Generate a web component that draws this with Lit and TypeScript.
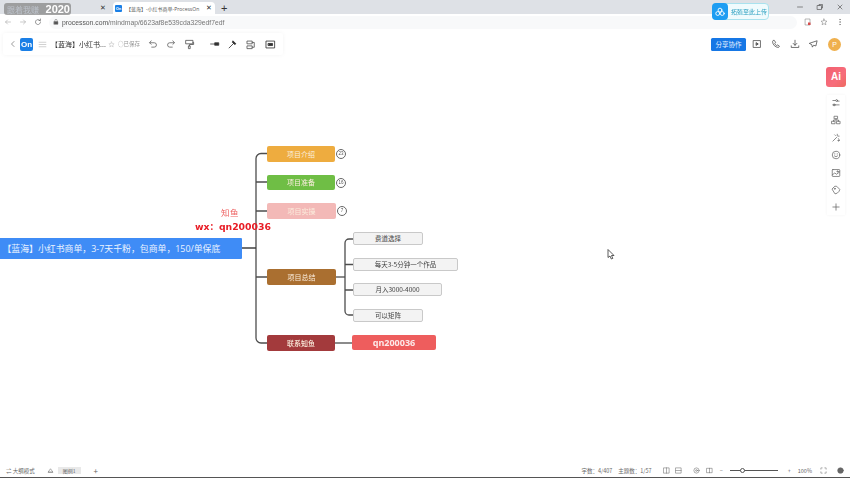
import { LitElement, html, css, svg } from "lit";
import { customElement } from "lit/decorators.js";

const ic = (w: number, body: unknown, cls = "") => html`<svg class="ic ${cls}" width=${w} height=${w} viewBox="0 0 16 16" fill="none" stroke="currentColor" stroke-width="1.2" stroke-linecap="round" stroke-linejoin="round">${body}</svg>`;

const topics = [
  { cls: "orange", x: 267, y: 146, w: 68, h: 16, t: "项目介绍", badge: "23" },
  { cls: "green", x: 267, y: 175, w: 68, h: 15, t: "项目准备", badge: "16" },
  { cls: "pink", x: 267, y: 203, w: 69, h: 16, t: "项目实操", badge: "7" },
  { cls: "brown", x: 267, y: 269, w: 69, h: 16, t: "项目总结" },
  { cls: "maroon", x: 267, y: 335, w: 68, h: 16, t: "联系知鱼" },
];
const leaves = [
  { x: 353, y: 232, w: 70, t: "费道选择" },
  { x: 353, y: 258, w: 105, t: "每天3-5分钟一个作品" },
  { x: 353, y: 283, w: 89, t: "月入3000-4000" },
  { x: 353, y: 309, w: 70, t: "可以矩阵" },
];

@customElement("app-root")
export class AppRoot extends LitElement {
  static styles = css`
    :host { display: block; width: 850px; height: 478px; overflow: hidden; background: #fff; font-family: "Open Sans", "Noto Sans CJK SC", sans-serif; color: #444; }
    .page { width: 850px; height: 478px; display: flex; flex-direction: column; filter: blur(0.4px); position: relative; overflow: hidden; }
    .ic { display: block; flex: none; }

    .tabs { height: 14px; flex: none; background: #dee1e6; display: flex; align-items: flex-end; position: relative; font-size: 5px; color: #555; }
    .tab { width: 109px; height: 12px; display: flex; align-items: center; justify-content: flex-end; padding-right: 3px; box-sizing: border-box; flex: none; }
    .tab.active { width: 102px; margin-left: 4px; background: #fff; border-radius: 4px 4px 0 0; justify-content: flex-start; padding: 0 3px 0 2px; gap: 4px; }
    .favicon { width: 7px; height: 7px; background: #1a7fe6; color: #fff; font: 700 4px "Liberation Sans", sans-serif; text-align: center; line-height: 7px; border-radius: 1px; flex: none; }
    .tab .x { font: 7px "Liberation Sans", sans-serif; color: #333; flex: none; }
    .tab .grow { flex: 1; min-width: 0; white-space: nowrap; }
    .plus { margin-left: 6px; font: 11px/12px "Liberation Sans", sans-serif; color: #333; height: 12px; }
    .winctl { margin-left: auto; display: flex; gap: 12px; padding-right: 6px; height: 14px; align-items: center; color: #444; }
    .watermark { position: absolute; left: 4px; top: 3px; height: 12px; width: 67px; border-radius: 3px; background: rgba(132,132,132,.72); display: flex; align-items: center; justify-content: space-between; padding: 0 1px 0 3px; box-sizing: border-box; white-space: nowrap; }
    .watermark .cn { font: 8px "Noto Sans CJK SC", sans-serif; color: #bcc2ca; }
    .watermark b { font: 700 11px "Liberation Sans", sans-serif; color: #fff; }
    .cloud { position: absolute; left: 712px; top: 3px; width: 57px; height: 17px; border: 1px solid #a9e2ee; box-sizing: border-box; border-radius: 4px; background: #f0fbfd; display: flex; align-items: center; font-size: 6px; color: #2a9fc0; gap: 3px; white-space: nowrap; }
    .cloud .logo { width: 16px; height: 17px; margin-left: -1px; background: #1d9df2; border-radius: 4px; display: flex; align-items: center; justify-content: center; color: #fff; flex: none; }

    .addr { height: 16px; flex: none; background: #fff; display: flex; align-items: center; padding: 0 6px 0 4px; gap: 7px; color: #888; box-shadow: 0 1px 0 #f0f0f0; }
    .addr .light { color: #aaa; }
    .addr .reload { color: #555; }
    .urlbar { flex: 1; min-width: 0; height: 13px; border-radius: 7px; background: #f8f9fa; display: flex; align-items: center; gap: 3px; padding-left: 4px; box-sizing: border-box; font: 6.8px "Liberation Sans", sans-serif; color: #555; }
    .urlbar .dim { color: #777; }
    .addr .end { display: flex; gap: 8px; align-items: center; flex: none; }

    .canvas { flex: 1; position: relative; background: #fff; min-height: 0; }
    .bar { position: absolute; background: #fff; box-shadow: 0 0 4px rgba(0,0,0,.05); border-radius: 3px; display: flex; align-items: center; }
    .left { left: 3px; top: 3px; height: 22px; width: 280px; color: #555; }
    .left .on { width: 13px; height: 13px; background: #1a7fe6; color: #fff; font: 700 8px/13px "Liberation Sans", sans-serif; text-align: center; border-radius: 2px; margin-left: 3px; }
    .left .title { font: 7px "Noto Sans CJK SC", sans-serif; color: #333; margin-left: 4px; white-space: nowrap; width: 57px; }
    .left .saved { font: 5.5px "Noto Sans CJK SC", sans-serif; color: #999; white-space: nowrap; margin-left: 3px; width: 24px; }
    .dimic { color: #bbb; }
    .dk { color: #333; }
    .right { left: 705px; top: 3px; height: 22px; width: 145px; gap: 0; box-shadow: none; }
    .share { width: 35px; height: 13px; margin-left: 6px; background: #1677e5; color: #e8f2ff; font: 6.5px/13px "Noto Sans CJK SC", sans-serif; text-align: center; border-radius: 1.5px; flex: none; }
    .avatar { width: 13px; height: 13px; border-radius: 50%; background: #efb04e; color: #fff; font: 7px/13px "Liberation Sans", sans-serif; text-align: center; flex: none; }
    .ai { position: absolute; left: 826px; top: 37px; width: 20px; height: 20px; border-radius: 3px; background: linear-gradient(135deg,#f2606f,#f76d7b 60%,#ee6a60); color: #fff; font: 700 10px/20px "Liberation Sans", sans-serif; text-align: center; }
    .tools { position: absolute; left: 827px; top: 65px; width: 18px; padding: 3px 0; display: flex; flex-direction: column; align-items: center; gap: 7.4px; color: #666; box-shadow: 0 0 3px rgba(0,0,0,.05); }

    .links { position: absolute; left: 0; top: -30px; }
    .node { position: absolute; box-sizing: border-box; text-align: center; white-space: nowrap; font: 6.5px "Noto Sans CJK SC", sans-serif; border-radius: 2px; }
    .root { left: 0; top: 208px; width: 242px; height: 21px; background: #3f8cf6; color: #eaf3ff; font: 8.9px/21px "Open Sans", "Noto Sans CJK SC", sans-serif; text-align: left; padding-left: 2.5px; border-radius: 0 1px 1px 0; }
    .topic { color: #fbeede; font-size: 7px; }
    .orange { background: #eeac3f; } .green { background: #6fbe45; } .pink { background: #f3b9b7; }
    .brown { background: #aa6f30; } .maroon { background: #a33a3c; font-weight: 500; }
    .leaf { height: 13px; line-height: 11px; background: #f3f3f3; border: 1px solid #c9c9c9; color: #444; }
    .qn { left: 352px; top: 305px; width: 84px; height: 15px; background: #ee5d5d; color: #fdeaea; font: 700 9px/15px "Noto Sans", sans-serif; }
    .badge { position: absolute; width: 8px; height: 8px; border: 1px solid #666; border-radius: 50%; font: 4.5px/8px "Liberation Sans", sans-serif; text-align: center; color: #555; }
    .zhi { position: absolute; left: 221px; top: 178px; font: 8.5px/11px "Liberation Serif","Noto Sans CJK SC",serif; color: #ee6262; letter-spacing: .5px; }
    .wx { position: absolute; left: 195px; top: 191px; font: 700 9.3px/12px "DejaVu Sans","Noto Sans CJK SC",sans-serif; color: #e81c25; white-space: nowrap; }
    .cursor { position: absolute; left: 607px; top: 219px; }

    .status { position: absolute; left: 0; right: 0; bottom: 2px; height: 11px; display: flex; align-items: center; font: 5.5px "Noto Sans CJK SC", sans-serif; color: #666; background: #fff; }
    .status .sheet { background: #e9e9e9; height: 7px; line-height: 7px; padding: 0 5px; font-size: 5px; margin-left: 4px; }
    .status .r { margin-left: auto; display: flex; align-items: center; padding-right: 6px; }
    .slider { width: 48px; height: 1px; background: #555; position: relative; margin: 0 5px 0 7px; }
    .slider i { position: absolute; left: 10px; top: -2px; width: 3px; height: 3px; border: 1px solid #555; border-radius: 50%; background: #fff; }
    .dark { position: absolute; left: 0; right: 0; bottom: 0; height: 1.5px; background: #555; }
    .m5 { margin-left: 5px; } .m6 { margin-left: 6px; } .m7 { margin-left: 7px; } .m8 { margin-left: 8px; } .m9 { margin-left: 9px; }
    .m10 { margin-left: 10px; } .m11 { margin-left: 11px; } .m12 { margin-left: 12px; } .m13 { margin-left: 13px; } .m15 { margin-left: 15px; }
  `;

  render() {
    return html`<div class="page">
      <div class="tabs">
        <div class="tab"><span class="x">✕</span></div>
        <div class="tab active"><span class="favicon">On</span><span class="grow">【蓝海】-小红书商单-ProcessOn</span><span class="x">✕</span></div>
        <span class="plus">+</span>
        <div class="winctl">
          ${ic(8, svg`<path d="M3 8h10"/>`)}
          ${ic(8, svg`<rect x="3" y="5" width="8" height="8"/><path d="M6 5V3h7v7h-2"/>`)}
          ${ic(8, svg`<path d="M4 4l8 8M12 4l-8 8"/>`)}
        </div>
        <div class="watermark"><span class="cn">跟着我赚</span><b>2020</b></div>
        <div class="cloud"><span class="logo">${ic(12, svg`<circle cx="8" cy="5.500" r="2.600"/><circle cx="5" cy="10" r="2.600"/><circle cx="11" cy="10" r="2.600"/>`)}</span>拓殖至此上传</div>
      </div>
      <div class="addr">
        <span class="light">${ic(8, svg`<path d="M13 8H3M7 4L3 8l4 4"/>`)}</span>
        <span class="light">${ic(8, svg`<path d="M3 8h10M9 4l4 4-4 4"/>`)}</span>
        <span class="reload">${ic(8, svg`<path d="M13 8a5 5 0 1 1-1.500-3.500M13 2v3h-3"/>`)}</span>
        <div class="urlbar">
          ${ic(6, svg`<rect x="3" y="7" width="10" height="7" fill="currentColor"/><path d="M5 7V4a3 3 0 0 1 6 0v3"/>`)}
          <span>processon.com<span class="dim">/mindmap/6623af8e539cda329edf7edf</span></span>
        </div>
        <div class="end">
          ${ic(8, svg`<rect x="3" y="2" width="9" height="12"/><rect x="8" y="9" width="5" height="5" fill="#d84a4a" stroke="none"/>`)}
          ${ic(8, svg`<path d="M8 2l1.800 4 4.200.4-3.200 2.800 1 4.300L8 11.200 4.200 13.500l1-4.300L2 6.400 6.200 6z"/>`)}
          ${ic(8, svg`<circle cx="8" cy="3" r=".8" fill="currentColor"/><circle cx="8" cy="8" r=".8" fill="currentColor"/><circle cx="8" cy="13" r=".8" fill="currentColor"/>`)}
        </div>
      </div>

      <div class="canvas">
        <svg class="links" width="850" height="478" fill="none" stroke="#4d4d4d" stroke-width="1.3">
          <path stroke="#222" d="M242 248H256"/>
          <path d="M267 153.500H261a5 5 0 0 0-5 5V338a5 5 0 0 0 5 5H267"/>
          <path d="M256 182H267M256 211H267M256 277H267"/>
          <path d="M336 277H345"/>
          <path d="M353 239H349a4 4 0 0 0-4 4V311a4 4 0 0 0 4 4H353"/>
          <path d="M345 264.500H353M345 290H353"/>
          <path d="M335 343H352"/>
        </svg>

        <div class="bar left">
          <span class="m6">${ic(8, svg`<path d="M10 3L5 8l5 5"/>`)}</span>
          <span class="on">On</span>
          <span class="m5 dimic">${ic(9, svg`<path d="M2 4h12M2 8h12M2 12h12"/>`)}</span>
          <span class="title">【蓝海】小红书...</span>
          <span class="dimic">${ic(7, svg`<path d="M8 2l1.800 4 4.200.4-3.200 2.800 1 4.300L8 11.200 4.200 13.500l1-4.300L2 6.400 6.200 6z"/>`)}</span>
          <span class="saved">◌已保存</span>
          <span class="m6">${ic(10, svg`<path d="M5 3L2.500 6 5 8.500M3 6h7a3.500 3.500 0 0 1 0 7H6"/>`)}</span>
          <span class="m8">${ic(10, svg`<path d="M11 3l2.500 3L11 8.500M13 6H6a3.500 3.500 0 0 0 0 7h4"/>`)}</span>
          <span class="m8">${ic(11, svg`<rect x="3" y="2" width="10" height="5"/><path d="M13 5h1v3H8v2M7 10h2v4H7z"/>`)}</span>
          <span class="m15 dk">${ic(10, svg`<path d="M1 8h7"/><rect x="8" y="6" width="6" height="4" fill="currentColor"/>`)}</span>
          <span class="m7 dk">${ic(11, svg`<path d="M3 13L10 6"/><path d="M9 3l4 4-2 1-3-3z" fill="currentColor"/>`)}</span>
          <span class="m8">${ic(11, svg`<path d="M2 3h7v4H2zM2 10h7v4H2zM9 5h3v7H9"/>`)}</span>
          <span class="m8 dk">${ic(11, svg`<rect x="2" y="3" width="12" height="10"/><rect x="5" y="6.500" width="6" height="3" fill="currentColor"/>`)}</span>
        </div>

        <div class="bar right">
          <span class="share">分享协作</span>
          <span class="m6">${ic(10, svg`<rect x="2.500" y="2.500" width="11" height="11"/><path d="M7 6l3 2-3 2z" fill="currentColor"/>`)}</span>
          <span class="m9">${ic(10, svg`<path d="M4 2L2.500 4c0 5 4.500 9.500 9.500 9.500l1.500-2-3-2-1.500 1c-1.500-.8-2.500-2-3-3.500l1-1.300z"/>`)}</span>
          <span class="m9">${ic(10, svg`<path d="M8 2v8M5 7l3 3 3-3M2 11v2.500h12V11"/>`)}</span>
          <span class="m8">${ic(10, svg`<path d="M14 3L2 7l4 2 1 4 2-3 3 1z"/>`)}</span>
          <span class="avatar m10">P</span>
        </div>

        <div class="ai">Ai</div>
        <div class="tools">
          ${ic(10, svg`<path d="M3 4h4M3 11h10M10 5h3"/><circle cx="9" cy="4" r="1.500"/><circle cx="5" cy="11" r="1.500"/>`)}
          ${ic(10, svg`<rect x="5.500" y="2" width="5" height="4"/><rect x="1.500" y="10" width="5" height="4"/><rect x="9.500" y="10" width="5" height="4"/><path d="M8 6v2M4 10V8h8v2"/>`)}
          ${ic(10, svg`<path d="M3 13L9 7M10 2v2M13 5h-2M13 10l-1-1M6 3l1 1"/><circle cx="12" cy="12" r="1"/>`)}
          ${ic(10, svg`<circle cx="8" cy="8" r="6"/><path d="M5.500 9.500c1.500 1.500 3.500 1.500 5 0M6 6v.5M10 6v.5"/>`)}
          ${ic(10, svg`<rect x="2" y="2.500" width="12" height="11" rx="1"/><path d="M2 11l4-3 3 2 5-4"/><circle cx="10.500" cy="5.500" r="1"/>`)}
          ${ic(10, svg`<path d="M2 6l4-4h3l5 5-1 3-3 3-3 1z"/><circle cx="6" cy="6" r=".8"/>`)}
          ${ic(10, svg`<path d="M8 3v10M3 8h10"/>`)}
        </div>

        <div class="node root">【蓝海】小红书商单，3-7天千粉，包商单，150/单保底</div>
        ${topics.map(t => html`<div class="node topic ${t.cls}" style="left:${t.x}px;top:${t.y - 30}px;width:${t.w}px;height:${t.h}px;line-height:${t.h}px">${t.t}</div>
          ${t.badge ? html`<span class="badge" style="left:${t.x + t.w + 1}px;top:${t.y - 30 + 3}px">${t.badge}</span>` : ""}`)}
        ${leaves.map(l => html`<div class="node leaf" style="left:${l.x}px;top:${l.y - 30}px;width:${l.w}px">${l.t}</div>`)}
        <div class="node qn">qn200036</div>
        <div class="zhi">知鱼</div>
        <div class="wx">wx：qn200036</div>

        <svg class="cursor" width="8" height="11" viewBox="0 0 8 11"><path d="M1 .5v8l2-1.500 1.300 3 1.500-.6L4.500 6.500H7z" fill="#fff" stroke="#333" stroke-width=".8"/></svg>

        <div class="status">
          <span class="m6">⇌ 大纲模式</span>
          <span class="m12">${ic(7, svg`<path d="M3 11l5-7 5 7z"/><path d="M3 12h10"/>`)}</span>
          <span class="sheet">图例1</span>
          <span class="m13" style="font-size:8px">+</span>
          <div class="r">
            <span>字数：4/407</span><span class="m6">主题数：1/57</span>
            <span class="m11">${ic(7, svg`<rect x="2" y="2" width="12" height="12"/><path d="M8 2v12"/>`)}</span>
            <span class="m5">${ic(7, svg`<rect x="2" y="2" width="12" height="12"/><path d="M2 8h12"/>`)}</span>
            <span class="m11">${ic(7, svg`<circle cx="8" cy="8" r="6"/><circle cx="8" cy="8" r="2"/>`)}</span>
            <span class="m6">${ic(7, svg`<rect x="2" y="3" width="12" height="10"/><path d="M8 3v10"/>`)}</span>
            <span class="m7">−</span>
            <div class="slider"><i></i></div>
            <span class="m5">+</span>
            <span class="m7">100%</span>
            <span class="m8">${ic(7, svg`<path d="M2 5V2h3M11 2h3v3M14 11v3h-3M5 14H2v-3"/>`)}</span>
            <span class="m10">${ic(7, svg`<circle cx="8" cy="8" r="6.500" fill="currentColor"/>`)}</span>
          </div>
        </div>
      </div>
      <div class="dark"></div>
    </div>`;
  }
}
